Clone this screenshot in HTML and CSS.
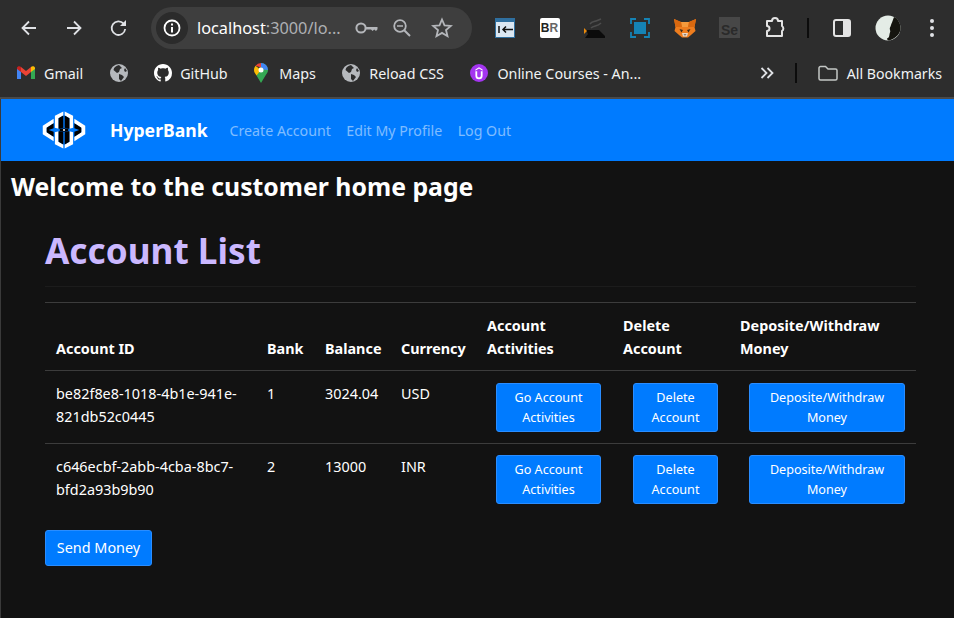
FILE: index.html
```html
<!DOCTYPE html>
<html>
	<head>
		<meta charset="UTF-8">
		<title>HyperBank</title>
		<link rel="stylesheet" href="styles.css">
	</head>
	<body>
		<!-- browser toolbar -->
		<div class="toolbar">
			<span class="slot"><svg width="20" height="20" viewBox="0 0 20 20"><path d="M17 10H4M10 3.500 3.500 10l6.500 6.500" fill="none" stroke="#dfe1e5" stroke-width="1.800"/></svg></span>
			<span class="slot"><svg width="20" height="20" viewBox="0 0 20 20"><path d="M3 10h13M10 3.500l6.500 6.500-6.500 6.500" fill="none" stroke="#dfe1e5" stroke-width="1.800"/></svg></span>
			<span class="slot"><svg width="20" height="20" viewBox="0 0 20 20"><path d="M16.200 11a6.800 6.800 0 1 1-1.600-5.300" fill="none" stroke="#dfe1e5" stroke-width="1.800"/><path d="M17 2v6h-6z" fill="#dfe1e5"/></svg></span>
			<div class="omnibox">
				<span class="site-info"><svg width="20" height="20" viewBox="0 0 20 20"><circle cx="10" cy="10" r="7.500" fill="none" stroke="#fff" stroke-width="1.800"/><path d="M9 9h2v5.500H9zM9 5.600h2v2H9z" fill="#fff"/></svg></span>
				<span class="url"><b>localhost</b>:3000/lo...</span>
				<svg class="omni-key" width="24" height="14" viewBox="0 0 24 14"><circle cx="6" cy="7" r="4.600" fill="none" stroke="#b4b6ba" stroke-width="2"/><path d="M10 6h12.500v2.200L21 10l-1.800-1.500-1.600 1.500-1.600-1.500H10z" fill="#b4b6ba"/></svg>
				<svg class="omni-zoom" width="20" height="20" viewBox="0 0 20 20"><circle cx="8" cy="8" r="5.800" fill="none" stroke="#b4b6ba" stroke-width="1.800"/><path d="M12.200 12.200 18 18" stroke="#b4b6ba" stroke-width="2"/><path d="M5 8h6" stroke="#b4b6ba" stroke-width="1.500"/></svg>
				<svg class="omni-star" width="22" height="22" viewBox="0 0 22 22"><path d="m11 2.500 2.500 5.800 6.300.6-4.800 4.100 1.500 6.200-5.500-3.300-5.500 3.300L7 13l-4.800-4.100 6.300-.6z" fill="none" stroke="#b4b6ba" stroke-width="1.800"/></svg>
			</div>
			<div class="extensions">
				<span class="slot"><svg width="20" height="20" viewBox="0 0 20 20"><rect width="20" height="20" fill="#dbe7f2"/><rect x="0.500" y="0.500" width="19" height="19" fill="none" stroke="#2f6f9f"/><rect width="20" height="4" fill="#2f6f9f"/><path d="M4 8v7M18 11.500H8M11 8.500l-3 3 3 3" fill="none" stroke="#111" stroke-width="1.500"/></svg></span>
				<span class="slot"><span class="ext-br">B<i>R</i></span></span>
				<span class="slot"><svg width="22" height="22" viewBox="0 0 22 22"><path d="M6 7c2-3 4-2 6-3l5-2M7 11c3-3 6-1 10-5" fill="none" stroke="#4d4d4d" stroke-width="1.500"/><path d="M2 13h13l6 6v2H1l3-4z" fill="#0b0b0b"/><path d="M0 11l3 3-3 3z" fill="#e8890c"/></svg></span>
				<span class="slot"><svg width="20" height="20" viewBox="0 0 20 20"><rect x="4" y="4" width="12" height="12" fill="#1583b5"/><path d="M1 6V1h5M14 1h5v5M19 14v5h-5M6 19H1v-5" fill="none" stroke="#1583b5" stroke-width="1.800"/></svg></span>
				<span class="slot"><svg width="22" height="20" viewBox="0 0 22 20"><path d="M0 1l7 3h8l7-3-1.500 8 1 4-4.500 4-3 2.500H8L5 17l-4.500-4 1-4z" fill="#ee7d1e"/><path d="M7 4h8l-1 5H8z" fill="#f59a3c"/><path d="M0 1l7 3 1 5-6.500 0z" fill="#d9680f"/><path d="M22 1l-7 3-1 5 6.500 0z" fill="#d9680f"/><path d="M5.500 11l3.500 1-1.500 2.500zM16.500 11l-3.500 1 1.500 2.500z" fill="#3a2a1c"/><path d="M8 15h6l-1 3.500H9z" fill="#e8d8c8"/><path d="M9.500 16.500h3l-1.500 1z" fill="#2d2018"/></svg></span>
				<span class="slot"><span class="ext-se">Se</span></span>
				<span class="slot"><svg width="22" height="22" viewBox="0 0 22 22"><path d="M3 4h5a3 3 0 0 1 6 0h4v5a3 3 0 0 1 0 5v5H3v-5a2.500 2.500 0 0 0 0-5z" fill="none" stroke="#e3e3e3" stroke-width="2" stroke-linejoin="round"/></svg></span>
			</div>
			<span class="divider"></span>
			<span class="slot panel-slot"><svg width="18" height="18" viewBox="0 0 18 18"><rect x="1" y="1" width="16" height="16" rx="2" fill="none" stroke="#e3e3e3" stroke-width="2"/><rect x="10" y="1" width="7" height="16" fill="#e3e3e3"/></svg></span>
			<span class="slot avatar-slot"><svg width="26" height="26" viewBox="0 0 26 26"><circle cx="13" cy="13" r="12.500" fill="#e4ece6"/><path d="M19 2c4 2 6.500 6 6.500 11S22 23 14 25.500c-1 0-2-1-2-2 3-1 2-4 3-6s-1-3 0-5 1-3 2-5z" fill="#15150f"/></svg></span>
			<span class="slot menu-slot"><svg width="6" height="20" viewBox="0 0 6 20"><circle cx="3" cy="3" r="2" fill="#dfe1e5"/><circle cx="3" cy="10" r="2" fill="#dfe1e5"/><circle cx="3" cy="17" r="2" fill="#dfe1e5"/></svg></span>
		</div>

		<!-- bookmarks -->
		<div class="bookmarks">
			<a class="mark"><svg width="18" height="14" viewBox="0 0 18 14"><path d="M0 2v11h4V5z" fill="#4285f4"/><path d="M18 2v11h-4V5z" fill="#34a853"/><path d="M4 6l5 4 5-4V1L9 5 4 1z" fill="#ea4335"/><path d="M0 2c0-2 3-2.500 4-1v5L0 3z" fill="#c5221f"/><path d="M18 2c0-2-3-2.500-4-1v5l4-3z" fill="#fbbc04"/></svg>Gmail</a>
			<a class="mark"><svg width="18" height="18" viewBox="0 0 18 18"><circle cx="9" cy="9" r="9" fill="#b6b9bd"/><path d="M9 1C6 2 4 3 3.500 6L7 9l2-1 1-3 2-1zM9 10l3 1 2 2-3 4-2-2zM15 4l2 3-2 1-1-2z" fill="#2d2d2d"/></svg></a>
			<a class="mark"><svg class="gh" width="18" height="18" viewBox="0 0 16 16"><path fill="#fff" d="M8 0C3.580 0 0 3.580 0 8c0 3.540 2.290 6.530 5.470 7.590.4.070.55-.17.55-.38 0-.19-.01-.82-.01-1.490-2.010.37-2.530-.49-2.690-.94-.09-.23-.48-.94-.82-1.130-.28-.15-.68-.52-.01-.53.63-.01 1.080.58 1.230.82.720 1.210 1.870.87 2.330.66.070-.52.280-.87.510-1.070-1.780-.2-3.640-.89-3.640-3.950 0-.87.310-1.590.820-2.150-.08-.2-.36-1.020.08-2.120 0 0 .67-.21 2.200.82.640-.18 1.320-.27 2-.27s1.360.09 2 .27c1.530-1.040 2.200-.82 2.200-.82.440 1.100.16 1.920.08 2.120.51.560.82 1.270.82 2.150 0 3.070-1.870 3.750-3.650 3.950.29.250.54.730.54 1.480 0 1.070-.01 1.930-.01 2.200 0 .21.150.46.550.38A8.010 8.010 0 0 0 16 8c0-4.420-3.580-8-8-8z"/></svg>GitHub</a>
			<a class="mark"><svg class="pin" width="14" height="20" viewBox="0 0 14 20"><path d="M7 0a7 7 0 0 1 7 7c0 2-1 3.500-2.500 5.500L7 20 2.500 12.500" fill="#34a853"/><path d="M1.500 2.700A7 7 0 0 0 0 7c0 2 1 3.500 2.500 5.500L7 7z" fill="#fbbc04"/><path d="M1.500 2.700A7 7 0 0 1 7 0v4.500z" fill="#ea4335"/><path d="M7 0a7 7 0 0 1 7 7l-4.500-.5L7 4z" fill="#4285f4"/><circle cx="7" cy="7" r="2.500" fill="#fff"/></svg>Maps</a>
			<a class="mark"><svg width="18" height="18" viewBox="0 0 18 18"><circle cx="9" cy="9" r="9" fill="#b6b9bd"/><path d="M9 1C6 2 4 3 3.500 6L7 9l2-1 1-3 2-1zM9 10l3 1 2 2-3 4-2-2zM15 4l2 3-2 1-1-2z" fill="#2d2d2d"/></svg>Reload CSS</a>
			<a class="mark"><svg width="18" height="18" viewBox="0 0 20 20"><circle cx="10" cy="10" r="10" fill="#a435f0"/><path d="M6 8v5a4 4 0 0 0 8 0V8h-2v5a2 2 0 0 1-4 0V8zM10 3.500 14 6v1.500L10 5 6 7.500V6z" fill="#fff"/></svg>Online Courses - An...</a>
			<div class="marks-right">
				<svg class="chevrons" width="14" height="12" viewBox="0 0 14 12"><path d="M1.500 1l5 5-5 5M7.500 1l5 5-5 5" fill="none" stroke="#dfe1e5" stroke-width="1.800"/></svg>
				<span class="divider"></span>
				<a class="mark all-marks"><svg width="20" height="16" viewBox="0 0 20 16"><path d="M1 3a1.500 1.500 0 0 1 1.500-1.500h5L10 4h7.500A1.500 1.500 0 0 1 19 5.500v8a1.500 1.500 0 0 1-1.500 1.500h-15A1.500 1.500 0 0 1 1 13.500z" fill="none" stroke="#c4c7c5" stroke-width="1.500"/></svg>All Bookmarks</a>
			</div>
		</div>

		<!-- site -->
		<div class="page">
			<nav class="navbar">
				<svg class="logo" width="56" height="50" viewBox="0 0 56 50.600">
					<defs>
						<g id="logo-part">
							<path d="M6.500 25.300V21L17.500 14v4.500L10.500 23v2.300z" fill="#fff"/>
							<path d="M10.500 25.300V23l7-4.500v5l-5 1.800z" fill="#000"/>
							<path d="M18.800 11l8.500-4.500V10.500L22.500 13.500V24l-3.700-1z" fill="#fff"/>
							<path d="M22.500 13.500l4.800-3V23l-3 1h-1.800z" fill="#000"/>
						</g>
					</defs>
					<use href="#logo-part"/>
					<use href="#logo-part" transform="matrix(-1 0 0 1 56 0)"/>
					<use href="#logo-part" transform="matrix(1 0 0 -1 0 50.600)"/>
					<use href="#logo-part" transform="matrix(-1 0 0 -1 56 50.600)"/>
					<ellipse cx="28" cy="25.300" rx="4.500" ry="1.800" fill="#000"/>
					<circle cx="28" cy="25.300" r="1" fill="#fff"/>
				</svg>
				<a class="brand">HyperBank</a>
				<a class="nav-link">Create Account</a>
				<a class="nav-link">Edit My Profile</a>
				<a class="nav-link">Log Out</a>
			</nav>
			<h2 class="welcome">Welcome to the customer home page</h2>
			<div class="container">
				<h1 class="title">Account List</h1>
				<hr>
				<table>
					<colgroup>
						<col class="c-id"><col class="c-bank"><col class="c-balance"><col class="c-currency"><col class="c-activity"><col class="c-delete"><col class="c-money">
					</colgroup>
					<thead>
						<tr>
							<th>Account ID</th>
							<th>Bank</th>
							<th>Balance</th>
							<th>Currency</th>
							<th>Account Activities</th>
							<th>Delete Account</th>
							<th>Deposite/Withdraw Money</th>
						</tr>
					</thead>
					<tbody>
						<tr>
							<td>be82f8e8-1018-4b1e-941e-821db52c0445</td>
							<td>1</td>
							<td>3024.04</td>
							<td>USD</td>
							<td class="act"><button class="btn b-activity">Go Account Activities</button></td>
							<td class="act"><button class="btn b-delete">Delete Account</button></td>
							<td class="act"><button class="btn b-money">Deposite/Withdraw Money</button></td>
						</tr>
						<tr>
							<td>c646ecbf-2abb-4cba-8bc7-bfd2a93b9b90</td>
							<td>2</td>
							<td>13000</td>
							<td>INR</td>
							<td class="act"><button class="btn b-activity">Go Account Activities</button></td>
							<td class="act"><button class="btn b-delete">Delete Account</button></td>
							<td class="act"><button class="btn b-money">Deposite/Withdraw Money</button></td>
						</tr>
					</tbody>
				</table>
				<button class="btn send">Send Money</button>
			</div>
		</div>
	</body>
</html>
```

FILE: styles.css
```css
*{
	box-sizing: border-box;
}
html, body{
	margin: 0;
	height: 100%;
	overflow: hidden;
	background: #121212;
}
body{
	font-family: "Noto Sans", sans-serif;
	color: #fff;
}

/* browser */
.toolbar{
	height: 55px;
	padding-left: 6px;
	display: flex;
	align-items: center;
	background: #2d2d2d;
}
.slot{
	width: 45px;
	height: 30px;
	flex: none;
	display: flex;
	align-items: center;
	justify-content: center;
}
.omnibox{
	width: 321px;
	height: 42px;
	margin-left: 10px;
	padding-left: 5px;
	display: flex;
	align-items: center;
	border-radius: 21px;
	background: #3e3e3e;
}
.site-info{
	width: 32px;
	height: 32px;
	display: flex;
	align-items: center;
	justify-content: center;
	border-radius: 50%;
	background: #2b2b2b;
}
.url{
	width: 147px;
	margin-left: 9px;
	font-size: 16.3px;
	color: #aeb0b3;
	white-space: nowrap;
}
.url b{
	font-weight: 400;
	color: #fff;
}
.omni-key{
	margin-left: 11px;
}
.omni-zoom{
	margin-left: 13px;
}
.omni-star{
	margin-left: 19px;
}
.extensions{
	margin-left: 10px;
	display: flex;
}
.ext-br{
	width: 20px;
	height: 20px;
	font: 700 12px/20px "Liberation Sans", sans-serif;
	text-align: center;
	color: #222;
	background: #fff;
	border-radius: 2px;
}
.ext-br i{
	font-style: normal;
	color: #666;
}
.ext-se{
	width: 21px;
	height: 21px;
	padding: 6px 0 0 2px;
	font: 700 14px/15px "Liberation Sans", sans-serif;
	color: #2a2a2a;
	background: #474747;
}
.divider{
	width: 2px;
	height: 20px;
	flex: none;
	background: #0c0c0c;
}
.toolbar .divider{
	margin-left: 10px;
}
.panel-slot{
	margin-left: 10px;
}
.avatar-slot{
	margin-left: 1px;
}
.menu-slot{
	margin-left: -1px;
}
.bookmarks{
	height: 44px;
	padding: 0 12px 6px 17px;
	display: flex;
	align-items: center;
	gap: 26.5px;
	font-size: 14.3px;
	background: #2d2d2d;
	border-bottom: 2px solid #4a4a4a;
}
.mark{
	display: flex;
	align-items: center;
	gap: 9px;
	color: #f1f3f4;
	white-space: nowrap;
}
.gh{
	margin-right: -1px;
}
.pin{
	margin-right: 2px;
}
.marks-right{
	margin-left: auto;
	display: flex;
	align-items: center;
}
.chevrons{
	margin-right: 21px;
}
.all-marks{
	margin-left: 21px;
	font-size: 14.15px;
}

/* site */
.page{
	height: calc(100% - 99px);
	border-left: 1px solid #3a3a3a;
}
.navbar{
	height: 62px;
	padding-left: 35px;
	display: flex;
	align-items: center;
	background: #007bff;
}
.brand{
	margin-left: 18px;
	margin-right: 22px;
	font-size: 17.6px;
	font-weight: 700;
	color: #fff;
}
.nav-link{
	margin-right: 15.5px;
	font-size: 14.2px;
	color: rgba(255,255,255,.5);
}
.welcome{
	margin: 11px 0 0 10px;
	font-size: 24.8px;
	line-height: 29px;
	font-weight: 700;
}
.container{
	width: 871px;
	margin-left: 44px;
}
.title{
	margin: 24px 0 0;
	font-size: 35.2px;
	line-height: 50px;
	font-weight: 700;
	color: #cbb8ff;
}
hr{
	margin: 11px 0 15px;
	border: 0;
	border-top: 1px solid #1c1c1c;
}
table{
	width: 100%;
	table-layout: fixed;
	border-collapse: collapse;
	font-size: 14.4px;
	line-height: 22.5px;
}
.c-id{ width: 211px; }
.c-bank{ width: 58px; }
.c-balance{ width: 76px; }
.c-currency{ width: 86px; }
.c-activity{ width: 136px; }
.c-delete{ width: 117px; }
.c-money{ width: 187px; }
th{
	height: 68px;
	padding: 11px 11px 10px;
	text-align: left;
	vertical-align: bottom;
	font-weight: 700;
	border-top: 1px solid #3c3c3c;
	border-bottom: 1px solid #3c3c3c;
}
td{
	height: 73px;
	padding: 12px 11px 11px;
	vertical-align: top;
	border-bottom: 1px solid #3c3c3c;
}
tbody tr:last-child td{
	border-bottom: 0;
}
tbody tr:last-child .act{
	padding-top: 11px;
}
.act{
	text-align: right;
}
.btn{
	padding: 4px 5px;
	font-family: inherit;
	font-size: 12.6px;
	line-height: 19.5px;
	color: #fff;
	background: #007bff;
	border: 1px solid #2a8dff;
	border-radius: 3px;
}
.b-activity{ width: 105px; }
.b-delete{ width: 85px; }
.b-money{ width: 156px; }
.send{
	display: block;
	width: 107px;
	height: 36px;
	margin-top: 13px;
	padding: 0;
	font-size: 14.4px;
}
```
